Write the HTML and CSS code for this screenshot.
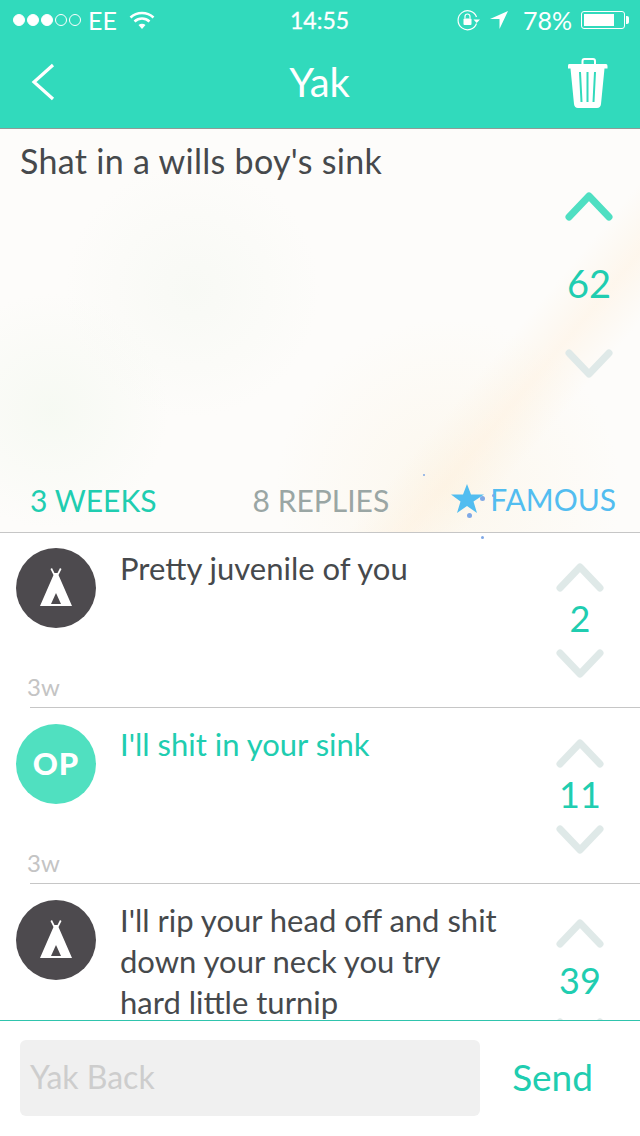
FILE: index.html
```html
<!DOCTYPE html>
<html lang="en">
<head>
    <meta charset="UTF-8">
    <meta name="viewport" content="width=device-width, initial-scale=1.0">
    <title>Yak</title>
    <link rel="stylesheet" href="styles.css">
</head>
<body>
    <div class="app">
        <header class="top">
            <div class="status">
                <div class="status-left">
                    <span class="dots"><i class="on"></i><i class="on"></i><i class="on"></i><i></i><i></i></span>
                    <span class="carrier">EE</span>
                    <svg class="wifi" width="26" height="20" viewBox="0 0 26 20">
                        <path d="M1.500 7.500C8 1.500 18 1.500 24.500 7.500" fill="none" stroke="#fff" stroke-width="2.600"/>
                        <path d="M5.500 11.500C10 7.500 16 7.500 20.500 11.500" fill="none" stroke="#fff" stroke-width="2.600"/>
                        <path d="M9.500 15C11.500 13.200 14.500 13.200 16.500 15L13 19Z" fill="#fff"/>
                    </svg>
                </div>
                <div class="clock">14:55</div>
                <div class="status-right">
                    <svg width="24" height="22" viewBox="0 0 24 22">
                        <path d="M19.500 14.500A9.500 9.500 0 1 1 19.500 8" fill="none" stroke="#fff" stroke-width="1.200"/>
                        <path d="M16.500 10.500H23L19.700 14Z" fill="#fff"/>
                        <rect x="6.500" y="9.500" width="8" height="6.500" rx="1" fill="#fff"/>
                        <path d="M8 9.500V7.500A2.500 2.500 0 0 1 13 7.500V9.500" fill="none" stroke="#fff" stroke-width="1.200"/>
                    </svg>
                    <svg class="arrow" width="20" height="20" viewBox="0 0 20 20">
                        <path d="M19 1L1 9H10.500V19Z" fill="#fff"/>
                    </svg>
                    <span class="battery-text">78%</span>
                    <span class="battery"><span class="battery-fill"></span></span>
                </div>
            </div>
            <nav class="nav">
                <svg class="back" width="26" height="38" viewBox="0 0 26 38">
                    <path d="M23 2L4 19L23 36" fill="none" stroke="#fff" stroke-width="3.200"/>
                </svg>
                <h1>Yak</h1>
                <svg class="trash" width="42" height="50" viewBox="0 0 42 50">
                    <path d="M15.500 6V3Q15.500 1 17.500 1H26Q28 1 28 3V6" fill="none" stroke="#fff" stroke-width="2"/>
                    <path d="M2 6H39Q40.500 6 40.500 8V10.500H37.500L34 46Q33.500 50 30 50H11Q7.500 50 7 46L3.500 10.500H1V8Q1 6 2 6Z" fill="#fff"/>
                    <path d="M13 14L14.500 44M20.500 14V44M28 14L26.500 44" fill="none" stroke="#31dabc" stroke-width="2"/>
                </svg>
            </nav>
        </header>

        <section class="post">
            <p class="post-text">Shat in a wills boy's sink</p>
            <div class="votes post-votes">
                <svg class="chev" width="50" height="30" viewBox="0 0 50 30"><path d="M5 26L25 5L45 26" class="chev-on"/></svg>
                <span class="count">62</span>
                <svg class="chev" width="50" height="30" viewBox="0 0 50 30"><path d="M5 4L25 25L45 4" class="chev-off"/></svg>
            </div>
            <div class="post-meta">
                <span class="age">3 WEEKS</span>
                <span class="replies">8 REPLIES</span>
                <span class="famous">
                    <svg width="34" height="30" viewBox="0 0 34 30">
                        <path d="M16 0L20 10.500H33L22.500 17.500L26 29L16 22L6 29L9.500 17.500L0 10.500H12Z" fill="#52bdf0"/>
                    </svg>FAMOUS</span>
            </div>
            <i class="spark spark-a"></i>
            <i class="spark spark-b"></i>
            <i class="spark spark-c"></i>
            <i class="spark spark-d"></i>
            <i class="spark spark-e"></i>
        </section>

        <section class="list">
            <article class="row">
                <div class="avatar">
                    <svg width="34" height="42" viewBox="0 0 34 42">
                        <path d="M13 1L15.500 6L18.500 6L21 1L22.500 2L19.500 8L33 39H1L14.500 8L11.500 2Z" fill="#fff"/>
                        <path d="M17 26L22 37H12Z" fill="#4d4a4e"/>
                    </svg>
                </div>
                <p class="row-text">Pretty juvenile of you</p>
                <div class="votes">
                    <svg class="chev" width="50" height="30" viewBox="0 0 50 30"><path d="M5 26L25 5L45 26" class="chev-off"/></svg>
                    <span class="count">2</span>
                    <svg class="chev" width="50" height="30" viewBox="0 0 50 30"><path d="M5 4L25 25L45 4" class="chev-off"/></svg>
                </div>
                <span class="row-age">3w</span>
            </article>
            <article class="row">
                <div class="avatar avatar-op">OP</div>
                <p class="row-text row-text-op">I'll shit in your sink</p>
                <div class="votes">
                    <svg class="chev" width="50" height="30" viewBox="0 0 50 30"><path d="M5 26L25 5L45 26" class="chev-off"/></svg>
                    <span class="count">11</span>
                    <svg class="chev" width="50" height="30" viewBox="0 0 50 30"><path d="M5 4L25 25L45 4" class="chev-off"/></svg>
                </div>
                <span class="row-age">3w</span>
            </article>
            <article class="row">
                <div class="avatar">
                    <svg width="34" height="42" viewBox="0 0 34 42">
                        <path d="M13 1L15.500 6L18.500 6L21 1L22.500 2L19.500 8L33 39H1L14.500 8L11.500 2Z" fill="#fff"/>
                        <path d="M17 26L22 37H12Z" fill="#4d4a4e"/>
                    </svg>
                </div>
                <p class="row-text">I'll rip your head off and shit down your neck you try hard little turnip</p>
                <div class="votes votes-long">
                    <svg class="chev" width="50" height="30" viewBox="0 0 50 30"><path d="M5 26L25 5L45 26" class="chev-off"/></svg>
                    <span class="count">39</span>
                    <svg class="chev" width="50" height="30" viewBox="0 0 50 30"><path d="M5 4L25 25L45 4" class="chev-off"/></svg>
                </div>
            </article>
        </section>

        <footer class="reply">
            <div class="reply-input">Yak Back</div>
            <span class="send">Send</span>
        </footer>
    </div>
</body>
</html>
```
FILE: styles.css
```css
html, body {
    margin: 0;
    padding: 0;
}

body {
    font-family: Lato, "Open Sans", sans-serif;
    background-color: #ffffff;
    color: #46494c;
}

.app {
    display: flex;
    flex-direction: column;
    width: 640px;
    height: 1136px;
    overflow: hidden;
}

/* Barra superior */
.top {
    flex: none;
    height: 128px;
    background-color: #31dabc;
    border-bottom: 1px solid #8f9a98;
    color: #ffffff;
}

.status {
    display: flex;
    align-items: center;
    justify-content: space-between;
    height: 40px;
    padding: 0 8px 0 13px;
    font-size: 25px;
    position: relative;
}

.status-left, .status-right {
    display: flex;
    align-items: center;
}

.dots {
    display: flex;
    gap: 2px;
}

.dots i {
    width: 12px;
    height: 12px;
    box-sizing: border-box;
    border: 1px solid #ffffff;
    border-radius: 50%;
}

.dots i.on {
    background-color: #ffffff;
}

.carrier {
    margin-left: 7px;
}

.wifi {
    margin-left: 12px;
}

.clock {
    position: absolute;
    left: 290px;
    font-size: 23px;
    -webkit-text-stroke: 0.3px #ffffff;
}

.arrow {
    margin-left: 8px;
}

.battery-text {
    margin-left: 14px;
}

.battery {
    position: relative;
    width: 44px;
    height: 18px;
    margin-left: 9px;
    margin-right: 7px;
    padding: 2px;
    box-sizing: border-box;
    border: 1px solid #ffffff;
    border-radius: 3px;
}

.battery::after {
    content: "";
    position: absolute;
    right: -5px;
    top: 4px;
    width: 3px;
    height: 8px;
    border-radius: 0 2px 2px 0;
    background-color: #ffffff;
}

.battery-fill {
    display: block;
    width: 78%;
    height: 100%;
    background-color: #ffffff;
}

.nav {
    display: grid;
    grid-template-columns: 1fr auto 1fr;
    align-items: center;
    height: 88px;
    padding: 0 31px 0 30px;
}

.nav h1 {
    margin: -5px 0 0;
    font-size: 40px;
    font-weight: 400;
}

.back {
    margin-top: -4px;
}

.trash {
    margin-top: -2px;
    justify-self: end;
}

/* Publicacion */
.post {
    flex: none;
    position: relative;
    height: 404px;
    box-sizing: border-box;
    border-bottom: 1px solid #c6c6c6;
    background-color: #fdfcfa;
    background-image:
        linear-gradient(130deg, transparent 70%, rgba(255, 236, 212, 0.35) 76%, transparent 82%),
        radial-gradient(circle at 8% 70%, rgba(240, 247, 236, 0.5), transparent 18%),
        radial-gradient(circle at 30% 40%, rgba(243, 247, 240, 0.5), transparent 25%),
        radial-gradient(circle at 70% 90%, rgba(252, 246, 234, 0.8), transparent 30%);
}

.post-text {
    margin: 0;
    padding: 11px 20px;
    font-size: 34px;
    letter-spacing: 0.3px;
    line-height: 42px;
}

.votes {
    position: absolute;
    display: flex;
    flex-direction: column;
    align-items: center;
}

.post-votes {
    right: 26px;
    top: 62px;
    gap: 40px;
}

.post-votes .count {
    margin-bottom: 4px;
}

.count {
    font-size: 38px;
    line-height: 44px;
    color: #20cdb0;
}

.chev {
    display: block;
}

.chev path {
    fill: none;
    stroke-width: 7;
    stroke-linecap: round;
    stroke-linejoin: round;
}

.chev-on {
    stroke: #4fdfc2;
}

.chev-off {
    stroke: #dfe9e8;
}

.post-meta {
    position: absolute;
    left: 30px;
    right: 24px;
    bottom: 12px;
    display: flex;
    align-items: center;
    font-size: 30px;
    line-height: 40px;
}

.age {
    color: #20cdb0;
}

.replies {
    margin-left: 96px;
    color: #9aa6a4;
}

.famous {
    display: flex;
    align-items: center;
    margin-left: auto;
    margin-top: -2px;
    color: #52bdf0;
    gap: 5px;
}

/* Destellos alrededor de la estrella */
.spark {
    position: absolute;
    width: 3px;
    height: 3px;
    border-radius: 50%;
    background-color: #7fa8e6;
}

.spark-a { left: 480px; top: 367px; width: 5px; height: 5px; }
.spark-b { left: 467px; top: 384px; width: 5px; height: 5px; }
.spark-c { left: 492px; top: 365px; }
.spark-d { left: 423px; top: 345px; width: 2px; height: 2px; }
.spark-e { left: 481px; top: 407px; }

/* Respuestas */
.list {
    flex: 1;
    min-height: 0;
    margin-top: -1px;
    overflow: hidden;
}

.row {
    position: relative;
    height: 176px;
    box-sizing: border-box;
    padding: 16px 0 0 16px;
    display: flex;
    gap: 24px;
}

.row + .row::before {
    content: "";
    position: absolute;
    left: 30px;
    right: 0;
    top: -1px;
    height: 1px;
    background-color: #c6c6c6;
}

.avatar {
    flex: none;
    display: flex;
    align-items: center;
    justify-content: center;
    width: 80px;
    height: 80px;
    border-radius: 50%;
    background-color: #4d4a4e;
}

.avatar-op {
    box-sizing: border-box;
    padding-bottom: 3px;
    background-color: #50e0c0;
    color: #ffffff;
    font-size: 31px;
    font-weight: 900;
    letter-spacing: 1px;
}

.row-text {
    margin: 0;
    width: 382px;
    font-size: 31px;
    line-height: 41px;
}

.row-text-op {
    color: #20cdb0;
}

.row .votes {
    right: 35px;
    top: 30px;
}

.row .count {
    margin: 4px 0 9px;
    font-size: 36px;
}

.row-age {
    position: absolute;
    left: 27px;
    top: 141px;
    font-size: 24px;
    line-height: 28px;
    color: #c4c4c4;
}

.row .votes-long {
    top: 34px;
}

.row .votes-long .count {
    margin: 10px 0 16px;
}

/* Caja de respuesta */
.reply {
    flex: none;
    position: relative;
    display: flex;
    align-items: center;
    justify-content: space-between;
    height: 116px;
    box-sizing: border-box;
    padding: 0 47px 1px 20px;
    background-color: #ffffff;
    border-top: 1px solid #2fc4ad;
}

.reply-input {
    width: 460px;
    height: 76px;
    box-sizing: border-box;
    padding-left: 10px;
    background-color: #f0f0f0;
    border-radius: 6px;
    font-size: 32px;
    line-height: 74px;
    color: #cdcdcd;
}

.send {
    margin-bottom: 4px;
    font-size: 37px;
    color: #20cdb0;
}
```
